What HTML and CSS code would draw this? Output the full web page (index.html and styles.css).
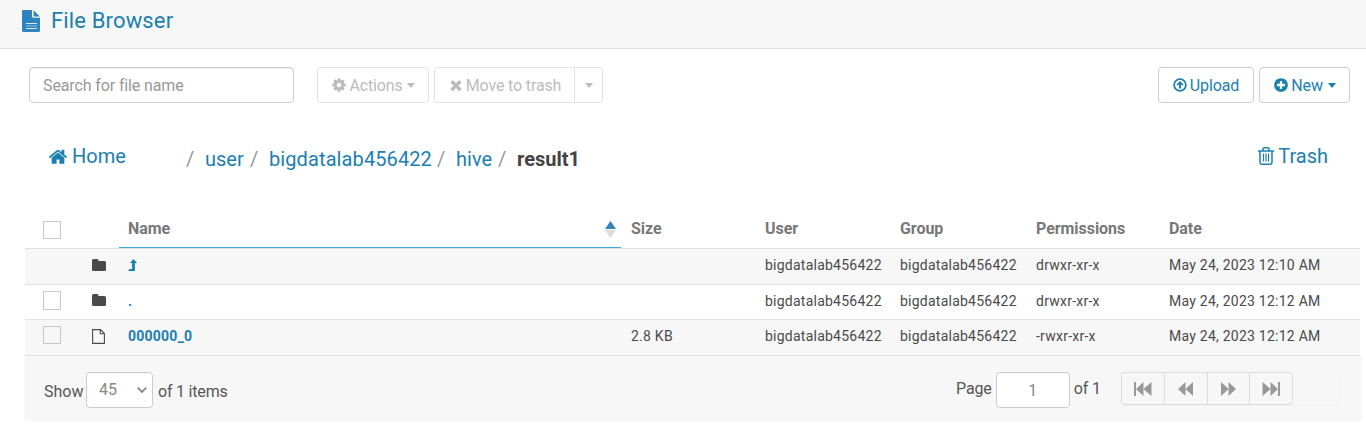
FILE: index.html
```html
<!DOCTYPE html>
<html lang="en">
<head>
<meta charset="utf-8">
<title>File Browser</title>
<link rel="stylesheet" href="styles.css">
</head>
<body>
<header class="topbar">
  <svg class="doc-icon" viewBox="0 0 18 22"><path fill="#2f84c0" d="M1.2 0H10v6.2Q10 7.800 11.600 7.800H18V20.800Q18 22 16.800 22H1.200Q0 22 0 20.800V1.200Q0 0 1.200 0zM11.600 0.300L17.700 6.400H11.600z"/><path stroke="#d3e7f5" stroke-width="1.200" d="M4 13.500h11M4 18.500h11"/><path stroke="#8dbce0" d="M4 16h11"/></svg>
  <h1 class="title">File Browser</h1>
</header>
<section class="toolbar">
  <input class="search" type="text" placeholder="Search for file name">
  <button class="btn muted actions">
    <svg class="fa" viewBox="0 0 1792 1792"><path d="M1152 896q0-106-75-181t-181-75-181 75-75 181 75 181 181 75 181-75 75-181zm512-109v222q0 12-8 23t-20 13l-185 28q-19 54-39 91 35 50 107 138 10 12 10 25t-9 23q-27 37-99 108t-94 71q-12 0-26-9l-138-108q-44 23-91 38-16 136-29 186-7 28-36 28h-222q-14 0-24.500-8.500t-11.500-21.500l-28-184q-49-16-90-37l-141 107q-10 9-25 9-14 0-25-11-126-114-165-168-7-10-7-23 0-12 8-23 15-21 51-66.500t54-70.500q-27-50-41-99l-183-27q-13-2-21-12.500t-8-23.500v-222q0-12 8-23t19-13l186-28q14-46 39-92-40-57-107-138-10-12-10-24 0-10 9-23 26-36 98.500-107.500t94.500-71.500q13 0 26 10l138 107q44-23 91-38 16-136 29-186 7-28 36-28h222q14 0 24.500 8.500t11.500 21.500l28 184q49 16 90 37l142-107q9-9 24-9 13 0 25 10 129 119 165 170 7 8 7 22 0 12-8 23-15 21-51 66.500t-54 70.500q26 50 41 98l183 28q13 2 21 12.500t8 23.500z"/></svg>
    <span>Actions</span><i class="caret"></i>
  </button>
  <div class="split">
    <button class="btn muted move">
      <svg class="fa" viewBox="0 0 1792 1792"><path d="M1490 1322q0 40-28 68l-136 136q-28 28-68 28t-68-28l-294-294-294 294q-28 28-68 28t-68-28l-136-136q-28-28-28-68t28-68l294-294-294-294q-28-28-28-68t28-68l136-136q28-28 68-28t68 28l294 294 294-294q28-28 68-28t68 28l136 136q28 28 28 68t-28 68l-294 294 294 294q28 28 28 68z"/></svg>
      <span>Move to trash</span>
    </button>
    <button class="btn muted more" aria-label="More"><i class="caret"></i></button>
  </div>
  <div class="right">
    <button class="btn upload">
      <svg class="fa" viewBox="0 0 16 16"><circle cx="8" cy="8" r="6.700" fill="none" stroke="currentColor" stroke-width="2"/><path d="M8 3.500l4 4-1 1.200-1.900-1.300V12H6.900V7.400L5 8.700l-1-1.200z"/></svg>
      <span>Upload</span>
    </button>
    <button class="btn new">
      <svg class="fa" viewBox="0 0 1792 1792"><path d="M1344 960v-128q0-26-19-45t-45-19h-256v-256q0-26-19-45t-45-19h-128q-26 0-45 19t-19 45v256h-256q-26 0-45 19t-19 45v128q0 26 19 45t45 19h256v256q0 26 19 45t45 19h128q26 0 45-19t19-45v-256h256q26 0 45-19t19-45zm320-64q0 209-103 385.500t-279.500 279.500-385.500 103-385.500-103-279.500-279.500-103-385.500 103-385.500 279.500-279.500 385.500-103 385.500 103 279.500 279.500 103 385.500z"/></svg>
      <span>New</span><i class="caret"></i>
    </button>
  </div>
</section>
<nav class="path">
  <a class="home"><svg class="home-icon" viewBox="80 200 1632 1340"><path d="M1472 992v480q0 26-19 45t-45 19h-384v-384h-256v384h-384q-26 0-45-19t-19-45v-480q0-1 .5-3t.5-3l575-474 575 474q1 2 1 6zm223-69l-62 74q-8 9-21 11h-3q-13 0-21-7l-692-577-692 577q-12 8-24 7-13-2-21-11l-62-74q-8-10-7-23.500t11-21.500l719-599q32-26 76-26t76 26l244 204v-195q0-14 9-23t23-9h192q14 0 23 9t9 23v408l219 182q10 8 11 21.500t-7 23.500z"/></svg><span>Home</span></a>
  <div class="crumbs">
    <span class="sep">/</span><a class="c-user">user</a><span class="sep">/</span><a class="c-lab">bigdatalab456422</a><span class="sep">/</span><a class="c-hive">hive</a><span class="sep">/</span><b>result1</b>
  </div>
  <a class="trash"><svg class="trash-icon" viewBox="0 0 16 18"><path fill="none" stroke="currentColor" stroke-width="1.500" d="M0 4h16M5 4V2.200Q5 .8 6.400.8h3.200Q11 .8 11 2.200V4M2 4v11.600Q2 17.200 3.700 17.200h8.600Q14 17.200 14 15.600V4"/><path stroke="currentColor" stroke-width="1.200" d="M5.500 6.500v8M8 6.500v8M10.500 6.500v8"/></svg><span>Trash</span></a>
</nav>
<main class="files">
  <div class="row head">
    <div class="sel"><i class="box"></i></div>
    <div class="name">Name<svg class="sort" viewBox="0 0 11 17"><path fill="#2f84bd" d="M5.500 0L11 8H0z"/><path fill="#dcdcdc" d="M0 9h11L5.500 17z"/></svg></div>
    <div>Size</div><div>User</div><div>Group</div><div>Permissions</div><div>Date</div>
  </div>
  <div class="row striped r1">
    <div class="sel"><svg class="folder" viewBox="0 0 14 12"><path d="M1.500 0h3.600Q6.500 0 6.500 1.500V2h6Q14 2 14 3.500v7Q14 12 12.500 12h-11Q0 12 0 10.500v-9Q0 0 1.500 0z"/></svg></div>
    <div class="name"><svg class="up" viewBox="0 0 9 12"><path d="M5.500 0L9 4H6.900v8H0l1.600-2h2.500V4H2z"/></svg></div>
    <div></div><div>bigdatalab456422</div><div>bigdatalab456422</div><div>drwxr-xr-x</div><div>May 24, 2023 12:10 AM</div>
  </div>
  <div class="row r2">
    <div class="sel"><i class="box"></i><svg class="folder" viewBox="0 0 14 12"><path d="M1.500 0h3.600Q6.500 0 6.500 1.500V2h6Q14 2 14 3.500v7Q14 12 12.500 12h-11Q0 12 0 10.500v-9Q0 0 1.500 0z"/></svg></div>
    <div class="name">.</div>
    <div></div><div>bigdatalab456422</div><div>bigdatalab456422</div><div>drwxr-xr-x</div><div>May 24, 2023 12:12 AM</div>
  </div>
  <div class="row striped r3">
    <div class="sel"><i class="box"></i><svg class="file" viewBox="0 0 13 15"><path fill="none" stroke="currentColor" stroke-width="1.100" d="M.6 .6H8.500L12.400 4.500V14.400H.6zM8.300 .6V4.700H12.400"/></svg></div>
    <div class="name">000000_0</div>
    <div>2.8 KB</div><div>bigdatalab456422</div><div>bigdatalab456422</div><div>-rwxr-xr-x</div><div>May 24, 2023 12:12 AM</div>
  </div>
</main>
<footer class="footer">
  <div class="show"><span>Show</span>
    <span class="select">45<svg class="chev" viewBox="0 0 10 6"><path fill="none" stroke="currentColor" stroke-width="1.800" d="M.7 .7L5 5 9.300 .7"/></svg></span>
    <span>of 1 items</span></div>
  <div class="pager"><span>Page</span><span class="page">1</span><span>of 1</span>
    <div class="nav-track"><div class="nav">
      <button><svg class="n18" viewBox="0 0 18 14"><path d="M0 0h2v14H0zM9.500 0v14L2 7zM17.500 0v14L9.500 7z"/></svg></button>
      <button><svg class="n15" viewBox="0 0 15 14"><path d="M7.500 0v14L0 7zM15 0v14L7.500 7z"/></svg></button>
      <button><svg class="n15" viewBox="0 0 15 14"><path d="M0 0v14l7.500-7zM7.500 0v14L15 7z"/></svg></button>
      <button><svg class="n18" viewBox="0 0 18 14"><path d="M.5 0v14l8-7zM8.500 0v14l7.500-7zM16 0h2v14h-2z"/></svg></button>
    </div></div>
  </div>
</footer>
</body>
</html>
```
FILE: styles.css
```css
* { box-sizing: border-box; }
body { margin: 0; width: 1366px; height: 432px; overflow: hidden; background: #fff; color: #555; font-family: Roboto, "Liberation Sans", sans-serif; font-size: 16px; }
svg { fill: currentColor; flex: none; display: block; }
button { font: inherit; letter-spacing: -.1px; padding: 0; }
.topbar { height: 49px; display: flex; align-items: flex-start; background: #f7f7f7; border-bottom: 1px solid #dcdcdc; padding-left: 22px; }
.doc-icon { width: 18px; height: 22px; margin-top: 10px; }
.title { margin: 6px 0 0 11px; font-size: 22px; line-height: 29px; font-weight: 400; letter-spacing: .15px; color: #1b80b0; }
.toolbar { display: flex; height: 54px; padding: 18px 16px 0 29px; }
.search { width: 265px; height: 36px; margin-right: 23px; border: 1px solid #ccc; border-radius: 4px; padding: 1px 13px 0; font: inherit; letter-spacing: -.12px; box-shadow: inset 0 1px 1px #0001; }
.search::placeholder { color: #999; opacity: 1; }
.btn { height: 36px; display: flex; align-items: center; justify-content: center; white-space: nowrap; background: #fff; border: 1px solid #ccc; border-radius: 4px; color: #1b80b0; gap: 3px; }
.btn span { padding-top: 1px; }
.fa { width: 16px; height: 16px; }
.muted { color: #bcbcbc; border-color: #e3e3e3; }
.caret { border: 4.5px solid transparent; border-top: 5px solid currentColor; border-bottom: 0; margin-left: 2px; }
.actions { width: 112px; margin-right: 5px; }
.actions, .move { gap: 2px; }
.actions, .move { letter-spacing: -.15px; }
.split { display: flex; }
.move { width: 141px; border-radius: 4px 0 0 4px; }
.more { width: 29px; margin-left: -1px; border-radius: 0 4px 4px 0; }
.more .caret { margin: 0; }
.right { margin-left: auto; display: flex; gap: 5px; }
.upload { width: 96px; }
.upload .fa { width: 14px; height: 14px; }
.new { width: 91px; gap: 2px; }
.new .caret { margin-left: 3px; }
.path { height: 106px; display: flex; align-items: flex-start; padding: 40px 38px 0 49px; font-size: 20px; line-height: 26px; color: #1b80b0; }
.home, .trash { display: flex; align-items: center; }
.home { width: 137px; gap: 5px; }
.home-icon { width: 18px; height: 15px; }
.crumbs { display: flex; padding-top: 3px; }
.sep { color: #999; width: 8px; margin-right: 11px; }
.c-user { width: 45px; }
.c-lab { width: 168px; letter-spacing: .1px; }
.c-hive { width: 42px; }
.crumbs b { color: #444; font-weight: 700; }
.trash { margin-left: auto; gap: 4px; }
.trash-icon { width: 16px; height: 18px; }
.files { width: 1335px; margin-left: 25px; font-size: 14px; letter-spacing: .24px; color: #4a4a4a; }
.row { display: grid; grid-template-columns: 94px 502px 134px 135px 136px 133px 201px; height: 36px; border-bottom: 1px solid #e1e1e1; }
.row > div { display: flex; align-items: center; padding: 0 0 3px 10px; white-space: nowrap; }
.row > .sel { padding: 0 0 4px 18px; }
.row > .name { padding-left: 9px; font-weight: 700; color: #1b80b0; }
.head { height: 40px; font-size: 16px; font-weight: 700; letter-spacing: -.05px; }
.head > div, .head > .name { padding-bottom: 0; color: #777; }
.head > .sel { padding: 3px 0 0 18px; }
.head > .name { border-bottom: 1px solid #3ba9df; }
.sort { width: 11px; height: 17px; margin: 2px 5px 0 auto; }
.box { width: 18px; height: 18px; border: 1px solid #c8c8c8; background: #fff; }
.striped, .striped .box { background: #f7f7f7; }
.r2 { height: 35px; }
.r2 .box { height: 19px; }
.r3 > .sel { padding-bottom: 5px; }
.folder { width: 14px; height: 12px; margin-left: 31px; }
.r1 .folder { margin-left: 49px; }
.up { width: 9px; height: 12px; }
.file { width: 13px; height: 15px; margin: 2px 0 0 31px; }
.footer { width: 1336px; height: 63px; margin-left: 25px; padding: 0 22px 0 19px; display: flex; justify-content: space-between; background: #f7f7f7; box-shadow: 0 1px 3px #0001; }
.show, .pager { display: flex; align-items: flex-start; line-height: 36px; padding-top: 16px; letter-spacing: -.1px; }
.show > span:first-child { width: 42px; padding-top: 2px; letter-spacing: 0; }
.show > span:last-child { padding: 2px 0 0 5px; letter-spacing: -.2px; }
.select { width: 67px; height: 36px; display: flex; align-items: center; justify-content: space-between; border: 1px solid #ccc; border-radius: 4px; background: #fff; color: #888; padding: 0 5px 0 12px; }
.chev { width: 10px; height: 6px; }
.pager > span { margin-top: -1px; }
.pager > .page { width: 74px; height: 36px; margin: 0 4px; border: 1px solid #ccc; border-radius: 4px; background: #fff; color: #888; text-align: center; }
.nav-track { width: 218px; margin-left: 20px; border: 1px solid #f2f2f2; border-left: 0; border-top: 0; border-radius: 4px; }
.nav { display: flex; width: 172px; height: 33px; border: 1px solid #ddd; border-radius: 4px; }
.nav button { flex: 1; display: flex; align-items: center; justify-content: center; background: none; border: 0; border-left: 1px solid #ddd; color: #999; }
.nav button:first-child { border-left: 0; }
.n18 { width: 18px; height: 14px; }
.n15 { width: 15px; height: 14px; }
```
